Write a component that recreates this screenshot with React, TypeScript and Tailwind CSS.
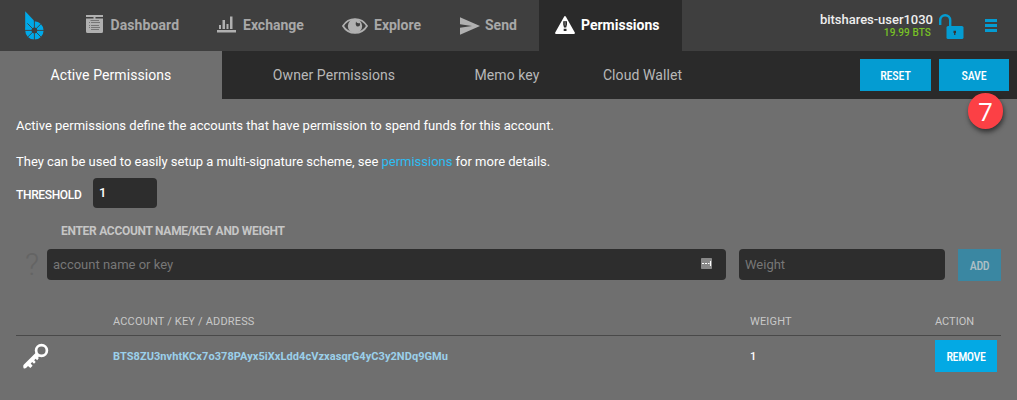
import type { ReactNode } from "react";

function Logo() {
  return (
    <svg width="20" height="30" viewBox="0 0 20 30">
      <g fill="#00a9e8">
        <path d="M0.2 0.2L8.9 9.6V19.4H0.2Z" />
        <circle cx="9.4" cy="19.4" r="9.2" />
      </g>
      <path d="M0 19.4H19M9.4 9.8V29M2.4 12.4L16.4 26.4M16.4 12.4L2.4 26.4" stroke="#3f3f3f" strokeWidth="0.9" />
      <circle cx="9.4" cy="19.4" r="2.8" fill="#3f3f3f" />
    </svg>
  );
}

function DashboardIcon() {
  return (
    <svg width="17" height="18" viewBox="0 0 17 18" className="-mt-[3px]">
      <path d="M0 0H17V2H9.5V3.5H17V16.5Q17 18 15.5 18H1.5Q0 18 0 16.5V3.5H7.5V2H0Z" fill="#b0b0b0" />
      <path d="M4.5 5.5H13M3 7.5H4M5 7.5H14M3 10.5H4M5 10.5H13M3 12.5H4M5 12.5H14M5 14.5H13" stroke="#666" strokeWidth="0.8" />
    </svg>
  );
}

function ExchangeIcon() {
  return (
    <svg width="19" height="17" viewBox="0 0 19 17" fill="#b0b0b0" className="-mt-0.5">
      <path d="M2 9H4V13H2ZM5.5 4H8V13H5.5ZM9.5 8H11.5V13H9.5ZM13 0.5H15.5V13H13ZM0 14H19V16.5H0Z" />
    </svg>
  );
}

function EyeIcon() {
  return (
    <svg width="26" height="16" viewBox="0 0 26 16">
      <path d="M1 8C6.5-1.2 19.5-1.2 25 8C19.5 17.2 6.5 17.2 1 8Z" fill="none" stroke="#b0b0b0" strokeWidth="1.8" />
      <circle cx="13" cy="8" r="7.2" fill="#b0b0b0" />
      <path d="M14 3.5Q14.8 5.8 17.8 5Q18.7 8.5 15.7 8.6Q13 8.2 14 3.5" fill="#3f3f3f" />
    </svg>
  );
}

function SendIcon() {
  return (
    <svg width="20" height="18" viewBox="0 0 20 18">
      <path d="M0 0.3L20 9L0 17.7V10.8L12 9L0 7.2Z" fill="#b0b0b0" />
    </svg>
  );
}

function WarningIcon() {
  return (
    <svg width="20" height="18" viewBox="0 0 20 18" className="-mt-px">
      <path d="M10 1L19 17H1Z" fill="#fff" stroke="#fff" strokeWidth="1.8" strokeLinejoin="round" />
      <path d="M8.2 5.2H12V8.5L11.2 11.5H9L8.2 8.5ZM8.7 12.7H11.5V15H8.7Z" fill="#2a2a2a" />
      <path d="M10.1 6V9.5" stroke="#999" strokeWidth="0.9" />
    </svg>
  );
}

function LockIcon() {
  return (
    <svg width="25" height="26" viewBox="0 0 25 26">
      <path d="M1.2 11V6.2A5 5 0 0 1 11.2 6.2V13" fill="none" stroke="#049cd2" strokeWidth="2.4" />
      <rect x="7.5" y="12" width="17" height="13" rx="1.6" fill="#049cd2" />
      <path d="M14.5 16.8H17V19H16.4V21H15.1V19H14.5Z" fill="#353535" />
    </svg>
  );
}

function KeyIcon() {
  return (
    <svg width="26" height="26" viewBox="0 0 26 26">
      <circle cx="18.5" cy="7.5" r="5.4" fill="none" stroke="#fff" strokeWidth="2.7" />
      <path d="M12.8 9.8L0.7 21.8Q0 22.6 0.3 24L0.6 25.2Q2 25.8 3.6 24.4L5 23L7.4 25L9.6 22.8L7.7 20.5L9.2 19L11 20.8L12.7 19L11.2 17.2L12.6 15.8L14.2 17.2L15.7 15.3L15.2 14L17 13Z" fill="#fff" />
    </svg>
  );
}

function NavItem({ icon, label, className }: { icon: ReactNode; label: string; className: string }) {
  return (
    <div className={`flex h-[51px] shrink-0 items-center text-[14px] font-bold ${className}`}>
      {icon}
      <span>{label}</span>
    </div>
  );
}

function Button({ label, className }: { label: string; className: string }) {
  return (
    <button className={`flex h-8 shrink-0 items-center justify-center text-[12px] font-medium [font-stretch:75%] ${className}`}>
      {label}
    </button>
  );
}

export default function App() {
  return (
    <div className="relative flex h-[400px] w-[1017px] flex-col overflow-hidden bg-[#6f6f6f] font-['Roboto',sans-serif] whitespace-nowrap text-white">
      <header className="flex h-[51px] shrink-0 bg-[#3f3f3f] text-[#a8a8a8]">
        <div className="w-[62px] shrink-0 pt-[11px] pl-[25px]"><Logo /></div>
        <NavItem icon={<DashboardIcon />} label="Dashboard" className="w-[131px] gap-[7.5px] pl-6 tracking-[0.1px]" />
        <NavItem icon={<ExchangeIcon />} label="Exchange" className="w-[125px] gap-[7px] pl-6" />
        <NavItem icon={<EyeIcon />} label="Explore" className="w-[118px] gap-[6px] pl-6" />
        <NavItem icon={<SendIcon />} label="Send" className="w-[103px] gap-[5px] pl-6" />
        <NavItem icon={<WarningIcon />} label="Permissions" className="w-[143px] gap-[6px] bg-[#2a2a2a] pl-4 text-white" />
        <div className="flex flex-1 pl-[138px]">
          <div className="w-[111px] pt-3 text-right">
            <div className="text-[13px] leading-4 font-medium tracking-[-0.03px] text-[#eee]">bitshares-user1030</div>
            <div className="text-[10px] leading-[10px] font-medium tracking-[0.1px] text-[#78c225]">19.99 BTS</div>
          </div>
          <div className="mt-[14px] ml-2"><LockIcon /></div>
          <div className="mt-[19px] ml-[21px] flex w-3 flex-col gap-[2px]">
            <i className="h-[3px] bg-[#049cd2]" />
            <i className="h-[3px] bg-[#049cd2]" />
            <i className="h-[3px] bg-[#049cd2]" />
          </div>
        </div>
      </header>

      <nav className="flex h-12 shrink-0 bg-[#2a2a2a] text-[14px] leading-[48px] tracking-[0.08px] text-[#b8b8b8]">
        <div className="w-[222px] bg-[#6f6f6f] text-center text-white">Active Permissions</div>
        <div className="w-[224px] text-center">Owner Permissions</div>
        <div className="w-[122px] text-center">Memo key</div>
        <div className="w-[149px] text-center">Cloud Wallet</div>
        <div className="flex flex-1 justify-end gap-2 pt-2 pr-2">
          <Button label="RESET" className="w-[71px] bg-[#049cd2] pt-[2px] tracking-[-0.1px] text-white" />
          <Button label="SAVE" className="w-[70px] bg-[#049cd2] pt-[2px] tracking-[-0.2px] text-white" />
        </div>
      </nav>

      <main className="flex flex-col px-4">
        <p className="mt-[17px] h-5 text-[13px] leading-5">Active permissions define the accounts that have permission to spend funds for this account.</p>
        <p className="mt-4 h-5 text-[13px] leading-5 tracking-[-0.015px]">
          They can be used to easily setup a multi-signature scheme, see <a className="text-[#2ebdf3]">permissions</a> for more details.
        </p>
        <div className="mt-[6px] flex h-[30px]">
          <label className="w-[77px] pt-[7px] text-[12px] leading-5 font-medium tracking-[-0.35px]">THRESHOLD</label>
          <div className="w-16 rounded bg-[#2d2d2d] pl-[6px] text-[13px] leading-[29px] font-medium">1</div>
        </div>
        <div className="mt-[13px] h-5 pl-[45px] text-[12px] leading-[21px] font-bold tracking-[-0.29px] text-[#c6c6c6]">ENTER ACCOUNT NAME/KEY AND WEIGHT</div>
        <div className="mt-2 flex h-8 text-[13px] text-[#777]">
          <div className="w-[31px] pl-[9px] text-[31px] leading-8 font-light text-[#646464]">?</div>
          <div className="flex h-[31px] w-[679px] justify-between rounded bg-[#2d2d2d] pr-[14px] pl-[6px] leading-[31px]">
            <span>account name or key</span>
            <svg className="mt-[9px]" width="11" height="11" viewBox="0 0 11 11">
              <rect width="11" height="11" rx="0.8" fill="#888" />
              <path d="M1 5.5H3M4 5.5H6M7 5.5H8.5M9.5 3V8" stroke="#fff" strokeWidth="1.1" />
            </svg>
          </div>
          <div className="ml-[13px] h-[31px] w-[206px] rounded bg-[#2d2d2d] pl-[6px] leading-[31px]">Weight</div>
          <Button label="ADD" className="ml-[13px] w-[43px] bg-[#3a87a2] pt-px tracking-[-0.4px] text-[#aebfc5]" />
        </div>

        <div className="mt-[29px] flex h-[26px] w-[985px] border-b border-[#494949] text-[11px] leading-[23px] tracking-[0.17px] text-[#c8c8c8]">
          <div className="w-[637px] pl-[97px]">ACCOUNT / KEY / ADDRESS</div>
          <div className="ml-[97px] w-[185px]">WEIGHT</div>
          <div className="tracking-normal">ACTION</div>
        </div>
        <div className="flex h-10 pt-1">
          <div className="w-[97px] pt-[3px] pl-[7px]"><KeyIcon /></div>
          <div className="w-[637px] pt-px text-[11px] leading-8 font-bold tracking-[0.06px] text-[#9bd0ea]">BTS8ZU3nvhtKCx7o378PAyx5iXxLdd4cVzxasqrG4yC3y2NDq9GMu</div>
          <div className="w-[185px] pt-px text-[11px] leading-8 font-medium">1</div>
          <Button label="REMOVE" className="w-[62px] bg-[#03a9e4] pt-[2px] tracking-[-0.4px] text-white" />
        </div>
      </main>

      <div className="absolute top-[93px] left-[968px] flex h-9 w-[35px] items-center justify-center rounded-full bg-[#fc4045] pt-px font-['Open_Sans',sans-serif] text-[26px] font-medium shadow-[1px_3px_5px_rgba(0,0,0,0.55)]">7</div>
    </div>
  );
}
